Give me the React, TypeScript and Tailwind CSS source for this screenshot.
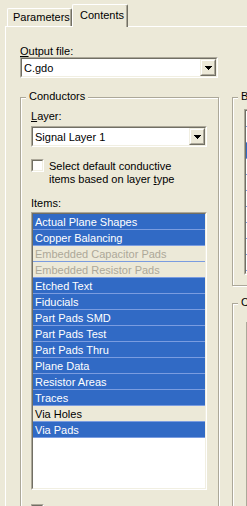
import React from 'react';

type ItemState = 'on' | 'off' | 'disabled';

const conductorItems: { name: string; state: ItemState }[] = [
  { name: 'Actual Plane Shapes', state: 'on' },
  { name: 'Copper Balancing', state: 'on' },
  { name: 'Embedded Capacitor Pads', state: 'disabled' },
  { name: 'Embedded Resistor Pads', state: 'disabled' },
  { name: 'Etched Text', state: 'on' },
  { name: 'Fiducials', state: 'on' },
  { name: 'Part Pads SMD', state: 'on' },
  { name: 'Part Pads Test', state: 'on' },
  { name: 'Part Pads Thru', state: 'on' },
  { name: 'Plane Data', state: 'on' },
  { name: 'Resistor Areas', state: 'on' },
  { name: 'Traces', state: 'on' },
  { name: 'Via Holes', state: 'off' },
  { name: 'Via Pads', state: 'on' },
];

const stateClass: Record<ItemState, string> = {
  on: 'bg-[#316AC5] text-white',
  off: 'bg-[#ECE9D8] text-black',
  disabled: 'bg-[#ECE9D8] text-[#ACA899]',
};

// classic 3D sunken frame (edit boxes, lists, checkboxes)
function Sunken({ className = '', children }: { className?: string; children?: React.ReactNode }) {
  return (
    <div className={`border border-t-[#ACA899] border-l-[#ACA899] border-b-white border-r-white ${className}`}>
      <div className="h-full overflow-hidden border border-t-[#716F64] border-l-[#716F64] border-b-[#F1EFE2] border-r-[#F1EFE2] bg-white">
        {children}
      </div>
    </div>
  );
}

function DropButton() {
  return (
    <div className="w-[16px] h-full border border-t-[#F1EFE2] border-l-[#F1EFE2] border-b-[#716F64] border-r-[#716F64] bg-[#ECE9D8]">
      <div className="h-full border border-t-white border-l-white border-b-[#ACA899] border-r-[#ACA899] flex items-center justify-center">
        <svg width="7" height="4" viewBox="0 0 7 4" shapeRendering="crispEdges">
          <path d="M0 0h7v1H0zM1 1h5v1H1zM2 2h3v1H2zM3 3h1v1H3z" fill="#000" />
        </svg>
      </div>
    </div>
  );
}

function ComboBox({ value, className }: { value: string; className: string }) {
  return (
    <Sunken className={`h-[21px] ${className}`}>
      <div className="flex h-full">
        <span className="flex-1 pl-[2px] pt-[1px] leading-[16px] whitespace-nowrap overflow-hidden">{value}</span>
        <DropButton />
      </div>
    </Sunken>
  );
}

function GroupBox({ title, className = '', children }: { title: string; className?: string; children?: React.ReactNode }) {
  return (
    <div className={`relative border border-[#ACA899] shadow-[inset_1px_1px_0_#fff,1px_1px_0_#fff] ${className}`}>
      <span className="absolute -top-[8px] left-[5px] px-[3px] leading-[13px] bg-[#ECE9D8] whitespace-nowrap">{title}</span>
      {children}
    </div>
  );
}

function CheckBox() {
  return (
    <Sunken className="w-[13px] h-[13px] shrink-0" />
  );
}

export default function App() {
  return (
    <div className="w-[247px] h-[506px] overflow-hidden bg-[#ECE9D8] pt-[4px] pl-[5px] font-['Liberation_Sans',Arial,sans-serif] text-[11px] text-black">
      {/* Tabs */}
      <div className="flex items-end h-[22px] pl-[2px]">
        <div className="h-[18px] w-[65px] border-l border-t border-r border-t-white border-l-white border-r-[#716F64] rounded-t-[2px] shadow-[inset_-1px_0_0_#ACA899] pl-[5px] pt-[2px] leading-[13px] whitespace-nowrap">
          Parameters
        </div>
        <div className="relative z-10 -mb-[1px] h-[23px] w-[56px] border-l border-t border-r border-t-white border-l-white border-r-[#716F64] rounded-t-[2px] shadow-[inset_-1px_0_0_#ACA899] bg-[#ECE9D8] pl-[7px] pt-[4px] leading-[13px] whitespace-nowrap">
          Contents
        </div>
      </div>

      {/* Tab panel */}
      <div className="w-[300px] h-[490px] border-l border-t border-white pt-[18px] pl-[14px]">
        <div className="h-[12px] leading-[12px]">
          <u>O</u>utput file:
        </div>
        <ComboBox value="C.gdo" className="w-[198px]" />

        <div className="flex gap-[13px] mt-[19px]">
          {/* Conductors */}
          <GroupBox title="Conductors" className="w-[199px] h-[440px] shrink-0 pt-[12px] pl-[10px]">
            <div className="h-[12px] leading-[12px]">
              <u>L</u>ayer:
            </div>
            <ComboBox value="Signal Layer 1" className="w-[176px] mt-[4px]" />

            <div className="flex items-start gap-[5px] mt-[12px]">
              <CheckBox />
              <div className="pt-[1px] leading-[13px] whitespace-nowrap">
                Select default conductive
                <br />
                items based on layer <u>t</u>ype
              </div>
            </div>

            <div className="h-[12px] leading-[12px] mt-[11px]">Items:</div>
            <Sunken className="w-[176px] h-[278px] mt-[3px]">
              {conductorItems.map((item) => (
                <div
                  key={item.name}
                  className={`h-[16px] border-b border-[#7A9CE0] pl-[2px] pt-[2px] leading-[13px] whitespace-nowrap ${stateClass[item.state]}`}
                >
                  {item.name}
                </div>
              ))}
            </Sunken>

            <div className="mt-[14px]">
              <CheckBox />
            </div>
          </GroupBox>

          {/* Right column */}
          <div className="flex flex-col w-[60px] shrink-0">
            <GroupBox title="B" className="h-[189px] pt-[11px] pl-[11px]">
              <Sunken className="w-[120px] h-[166px]">
                {Array.from({ length: 10 }).map((_, i) => (
                  <div
                    key={i}
                    className={`h-[16px] border-b border-[#7A9CE0] ${i === 2 ? 'bg-[#316AC5]' : 'bg-white'}`}
                  />
                ))}
              </Sunken>
            </GroupBox>
            <GroupBox title="C" className="mt-[17px] h-[300px] pt-[18px] pl-[13px]">
              <Sunken className="w-[100px] h-[250px]" />
            </GroupBox>
          </div>
        </div>
      </div>
    </div>
  );
}
